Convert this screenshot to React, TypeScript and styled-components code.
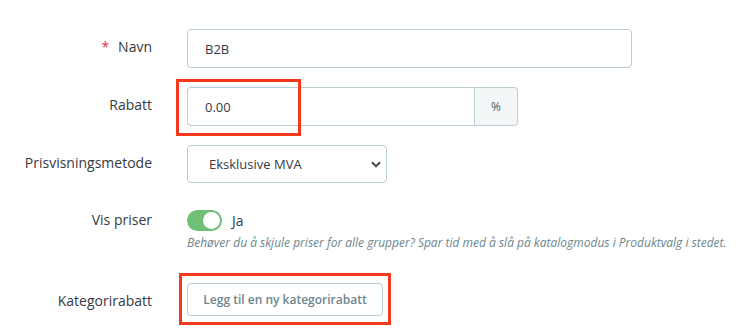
import { FC, PropsWithChildren } from 'react'
import styled, { createGlobalStyle } from 'styled-components'

const GlobalStyle = createGlobalStyle`
  html, body {
    margin: 0;
  }
  body {
    min-height: 331px;
    background: #fff;
    font-family: 'Open Sans', 'Noto Sans', sans-serif;
    color: #363a41;
  }
`

const Field: FC<PropsWithChildren<{ label: string; required?: boolean; $top?: number }>> = (
  props
) => (
  <Row $top={props.$top || 0}>
    <Label>
      {props.required && <Required>*</Required>}
      {props.label}
    </Label>
    <Control>{props.children}</Control>
  </Row>
)

const App = () => {
  return (
    <Form>
      <GlobalStyle />
      <Field label="Navn" required>
        <TextInput defaultValue="B2B" $width={445} />
      </Field>
      <Field label="Rabatt" $top={19}>
        <Marked>
          <InputGroup>
            <GroupInput defaultValue="0.00" />
            <Addon>%</Addon>
          </InputGroup>
          <Highlight $left={-11} $top={-8} $width={125} $height={57} />
        </Marked>
      </Field>
      <Field label="Prisvisningsmetode" $top={19}>
        <Select defaultValue="ex">
          <option value="ex">Eksklusive MVA</option>
          <option value="in">Inklusive MVA</option>
        </Select>
      </Field>
      <Field label="Vis priser" $top={19}>
        <ToggleCol>
          <ToggleLine>
            <Toggle $on>
              <Knob $on />
            </Toggle>
            <ToggleText>Ja</ToggleText>
          </ToggleLine>
          <Help>
            Behøver du å skjule priser for alle grupper? Spar tid med å slå på katalogmodus i
            Produktvalg i stedet.
          </Help>
        </ToggleCol>
      </Field>
      <Field label="Kategorirabatt" $top={31}>
        <Marked>
          <Button>Legg til en ny kategorirabatt</Button>
          <Highlight $left={-8} $top={-10} $width={212} $height={52} />
        </Marked>
      </Field>
    </Form>
  )
}

export default App

const Form = styled.div`
  display: flex;
  flex-direction: column;
  padding: 29px 0 15px;
`

const Row = styled.div<{ $top: number }>`
  display: grid;
  grid-template-columns: 152px 1fr;
  column-gap: 35px;
  align-items: start;
  margin-top: ${(props) => props.$top}px;
`

const Label = styled.div`
  display: flex;
  justify-content: flex-end;
  align-items: center;
  gap: 9px;
  min-height: 34px;
  font-size: 14px;
  color: #363a41;
`

const Required = styled.span`
  color: #e0334a;
  font-size: 14px;
`

const Control = styled.div`
  display: flex;
  align-items: flex-start;
`

const TextInput = styled.input<{ $width: number }>`
  box-sizing: border-box;
  width: ${(props) => props.$width}px;
  height: 39px;
  padding: 0 17px;
  border: 1px solid #bbcdd2;
  border-radius: 4px;
  font-family: 'Open Sans', sans-serif;
  font-size: 13px;
  color: #363a41;
  outline: none;
`

const Marked = styled.div`
  position: relative;
  display: flex;
`

const Highlight = styled.div<{ $left: number; $top: number; $width: number; $height: number }>`
  position: absolute;
  left: ${(props) => props.$left}px;
  top: ${(props) => props.$top}px;
  width: ${(props) => props.$width}px;
  height: ${(props) => props.$height}px;
  box-sizing: border-box;
  border: 3px solid #f5391c;
  pointer-events: none;
`

const InputGroup = styled.div`
  display: flex;
  width: 331px;
  height: 39px;
`

const GroupInput = styled.input`
  box-sizing: border-box;
  flex: 1;
  min-width: 0;
  height: 100%;
  padding: 0 17px;
  border: 1px solid #bbcdd2;
  border-right: none;
  border-radius: 4px 0 0 4px;
  font-family: 'Open Sans', sans-serif;
  font-size: 13px;
  color: #363a41;
  outline: none;
`

const Addon = styled.div`
  box-sizing: border-box;
  width: 44px;
  display: flex;
  align-items: center;
  justify-content: center;
  border: 1px solid #bbcdd2;
  border-radius: 0 4px 4px 0;
  background: #f3f6f7;
  font-size: 12px;
  color: #555b60;
`

const Select = styled.select`
  box-sizing: border-box;
  width: 200px;
  height: 38px;
  padding: 0 30px 0 21px;
  border: 1px solid #bbcdd2;
  border-radius: 4px;
  background: #fff
    url("data:image/svg+xml;utf8,<svg xmlns='http://www.w3.org/2000/svg' width='10' height='7' viewBox='0 0 10 7'><path d='M1 1.2 L5 5.2 L9 1.2' fill='none' stroke='%23505558' stroke-width='2.2'/></svg>")
    no-repeat right 5px center;
  appearance: none;
  font-family: 'Open Sans', sans-serif;
  font-size: 13px;
  color: #363a41;
  outline: none;
`

const ToggleCol = styled.div`
  display: flex;
  flex-direction: column;
  padding-top: 8px;
`

const ToggleLine = styled.div`
  display: flex;
  align-items: center;
  gap: 10px;
`

const Toggle = styled.div<{ $on: boolean }>`
  position: relative;
  width: 35px;
  height: 21px;
  border-radius: 11px;
  background: ${(props) => (props.$on ? '#70bf77' : '#bbcdd2')};
`

const Knob = styled.div<{ $on: boolean }>`
  position: absolute;
  top: 2px;
  left: ${(props) => (props.$on ? '16px' : '2px')};
  width: 17px;
  height: 17px;
  border-radius: 50%;
  background: #fff;
`

const ToggleText = styled.span`
  font-size: 14px;
  color: #363a41;
`

const Help = styled.div`
  margin-top: 3px;
  font-size: 12px;
  line-height: 18px;
  font-style: italic;
  color: #6c868e;
  white-space: nowrap;
`

const Button = styled.button`
  box-sizing: border-box;
  width: 196px;
  height: 33px;
  padding: 0;
  border: 1px solid #bbcdd2;
  border-radius: 4px;
  background: #fff;
  font-family: 'Open Sans', sans-serif;
  font-size: 12px;
  font-weight: 600;
  color: #6c868e;
`
